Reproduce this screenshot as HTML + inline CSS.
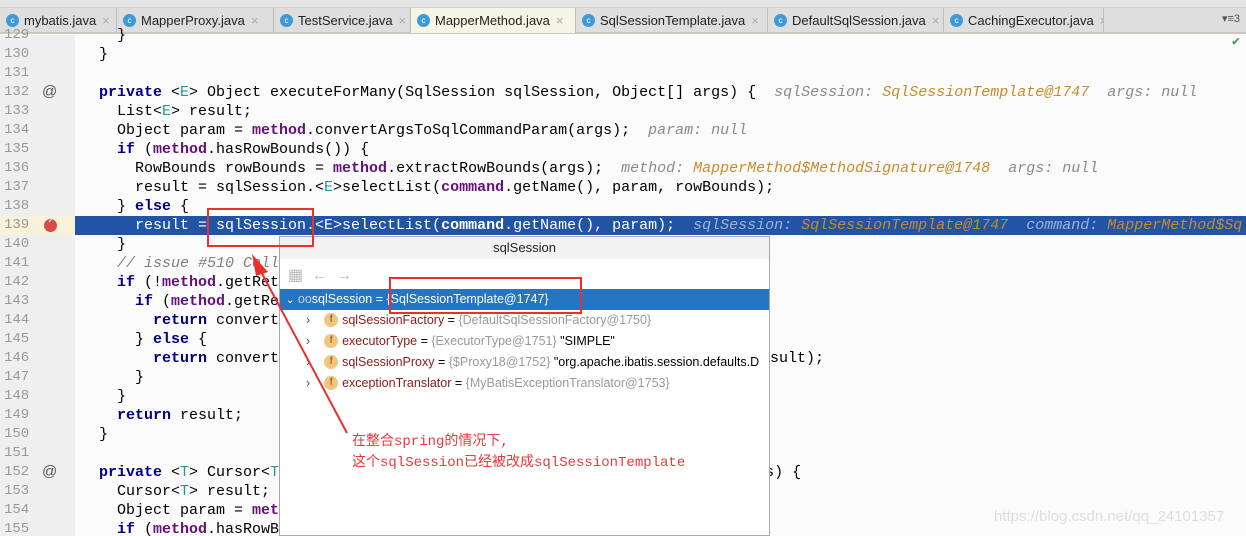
<!DOCTYPE html>
<html><head><meta charset="utf-8"><style>
*{margin:0;padding:0;box-sizing:border-box}
html,body{width:1246px;height:536px;overflow:hidden}
body{background:#fbfbfb;position:relative;font-family:"Liberation Mono",monospace}
#clip{position:absolute;left:0;top:0;width:1246px;height:536px;overflow:hidden}
.top{position:absolute;left:0;top:0;width:1246px;height:8px;background:#e4e4e4;border-bottom:1px solid #cfcfcf}
.tabs{position:absolute;left:0;top:8px;width:1246px;height:26px;background:#dedede;border-bottom:2px solid #c8c8bf}
.tab{position:absolute;top:0;height:25px;border-right:1px solid #bcbcbc;font:13px "Liberation Sans",sans-serif;color:#222;line-height:25px;padding-left:24px;white-space:nowrap;overflow:hidden}
.tab .c{position:absolute;left:6px;top:6px;width:13px;height:13px;border-radius:50%;background:#3d9ad6;color:#fff;font-size:8px;line-height:13px;text-align:center}
.tab .x{color:#aaa;margin-left:6px}
.tab.act{background:#f5f5e6}
.gutter{position:absolute;left:0;top:35px;width:75px;height:501px;background:#efefef}
.ln{position:absolute;left:4px;width:30px;font-size:14px;color:#999;height:19px;line-height:19px}
.code{position:absolute;left:0;height:19px;line-height:19px;font-size:15px;white-space:pre;color:#000}
.k{color:#000080;font-weight:bold}
.f{color:#660e7a;font-weight:bold}
.t{color:#20999d}
.h{color:#8a8a8a;font-style:italic}
.v{color:#c88b2a;font-style:italic}
.cm{color:#808080;font-style:italic}
.hl{position:absolute;left:75px;top:216px;width:1171px;height:19px;background:#2154a4}
.hl2{position:absolute;left:0;top:216px;width:75px;height:19px;background:#f7f2d9}
.popup{position:absolute;left:279px;top:236px;width:491px;height:300px;background:#fff;border:1px solid #a8a8a8;font-family:"Liberation Sans",sans-serif;overflow:hidden}
.ptitle{height:22px;background:#f2f2f2;text-align:center;font-size:13px;line-height:22px;color:#222}
.row{position:absolute;left:0;width:489px;height:21px;font-size:12.5px;line-height:21px;white-space:nowrap;overflow:hidden}
.fi{display:inline-block;width:14px;height:14px;border-radius:50%;background:#f2c57c;color:#7a4a00;font-size:10px;line-height:14px;text-align:center;vertical-align:middle;margin-right:4px;margin-top:-2px}
.nm{color:#8b1a1a}.gr{color:#999}
.rb{position:absolute;border:2px solid #e8312f}
.note{position:absolute;left:352px;color:#e43b3b;font-size:14px;font-family:"Liberation Mono","Noto Sans CJK SC",monospace;white-space:nowrap}
</style></head><body><div id="clip">
<div class="top"></div>
<div class="tabs">
<div class="tab" style="left:0;width:117px"><span class="c">c</span>mybatis.java<span class="x">×</span></div>
<div class="tab" style="left:117px;width:157px"><span class="c">c</span>MapperProxy.java<span class="x">×</span></div>
<div class="tab" style="left:274px;width:137px"><span class="c">c</span>TestService.java<span class="x">×</span></div>
<div class="tab act" style="left:411px;width:165px"><span class="c">c</span>MapperMethod.java<span class="x">×</span></div>
<div class="tab" style="left:576px;width:192px"><span class="c">c</span>SqlSessionTemplate.java<span class="x">×</span></div>
<div class="tab" style="left:768px;width:176px"><span class="c">c</span>DefaultSqlSession.java<span class="x">×</span></div>
<div class="tab" style="left:944px;width:160px"><span class="c">c</span>CachingExecutor.java<span class="x">×</span></div>
<div style="position:absolute;right:6px;top:4px;font:11px 'Liberation Sans';color:#555">▾≡3</div>
</div>
<div class="gutter"></div>
<div class="hl2"></div>
<div class="hl"></div>
<div style="position:absolute;left:1232px;top:34px;color:#3a9a3a;font-size:13px">✔</div>

<div class="ln" style="top:26px">129</div><div class="ln" style="top:45px">130</div><div class="ln" style="top:64px">131</div><div class="ln" style="top:83px">132</div><div class="ln" style="top:102px">133</div><div class="ln" style="top:121px">134</div><div class="ln" style="top:140px">135</div><div class="ln" style="top:159px">136</div><div class="ln" style="top:178px">137</div><div class="ln" style="top:197px">138</div><div class="ln" style="top:216px">139</div><div class="ln" style="top:235px">140</div><div class="ln" style="top:254px">141</div><div class="ln" style="top:273px">142</div><div class="ln" style="top:292px">143</div><div class="ln" style="top:311px">144</div><div class="ln" style="top:330px">145</div><div class="ln" style="top:349px">146</div><div class="ln" style="top:368px">147</div><div class="ln" style="top:387px">148</div><div class="ln" style="top:406px">149</div><div class="ln" style="top:425px">150</div><div class="ln" style="top:444px">151</div><div class="ln" style="top:463px">152</div><div class="ln" style="top:482px">153</div><div class="ln" style="top:501px">154</div><div class="ln" style="top:520px">155</div>
<div style="position:absolute;left:42px;top:83px;font:15px 'Liberation Sans';color:#555">@</div>
<div style="position:absolute;left:42px;top:463px;font:15px 'Liberation Sans';color:#555">@</div>
<div style="position:absolute;left:44px;top:219px;width:13px;height:13px;border-radius:50%;background:#d9484a"></div>
<div style="position:absolute;left:48px;top:216px;color:#fff;font-size:9px">✓</div>

<div class="code" style="top:26px;left:117px">}</div>
<div class="code" style="top:45px;left:99px">}</div>
<div class="code" style="top:83px;left:99px"><span class="k">private</span> &lt;<span class="t">E</span>&gt; Object executeForMany(SqlSession sqlSession, Object[] args) {  <span class="h">sqlSession: </span><span class="v">SqlSessionTemplate@1747</span>  <span class="h">args: null</span></div>
<div class="code" style="top:102px;left:117px">List&lt;<span class="t">E</span>&gt; result;</div>
<div class="code" style="top:121px;left:117px">Object param = <span class="f">method</span>.convertArgsToSqlCommandParam(args);  <span class="h">param: null</span></div>
<div class="code" style="top:140px;left:117px"><span class="k">if</span> (<span class="f">method</span>.hasRowBounds()) {</div>
<div class="code" style="top:159px;left:135px">RowBounds rowBounds = <span class="f">method</span>.extractRowBounds(args);  <span class="h">method: </span><span class="v">MapperMethod$MethodSignature@1748</span>  <span class="h">args: null</span></div>
<div class="code" style="top:178px;left:135px">result = sqlSession.&lt;<span class="t">E</span>&gt;selectList(<span class="f">command</span>.getName(), param, rowBounds);</div>
<div class="code" style="top:197px;left:117px">} <span class="k">else</span> {</div>
<div class="code" style="top:216px;left:135px;color:#fff">result = sqlSession.&lt;E&gt;selectList(<b>command</b>.getName(), param);  <span style="color:#9fb3d8;font-style:italic">sqlSession: </span><span class="v">SqlSessionTemplate@1747</span>  <span style="color:#9fb3d8;font-style:italic">command: </span><span class="v">MapperMethod$Sq</span></div>
<div class="code" style="top:235px;left:117px">}</div>
<div class="code" style="top:254px;left:117px"><span class="cm">// issue #510 Collections &amp; arrays support</span></div>
<div class="code" style="top:273px;left:117px"><span class="k">if</span> (!<span class="f">method</span>.getReturnsArray()) {</div>
<div class="code" style="top:292px;left:135px"><span class="k">if</span> (<span class="f">method</span>.getReturnsArray()) {</div>
<div class="code" style="top:311px;left:153px"><span class="k">return</span> convertToArray(result);</div>
<div class="code" style="top:330px;left:135px">} <span class="k">else</span> {</div>
<div class="code" style="top:349px;left:153px"><span class="k">return</span> convertToDeclaredCollection</div>
<div class="code" style="top:349px;left:770px">sult);</div>
<div class="code" style="top:368px;left:135px">}</div>
<div class="code" style="top:387px;left:117px">}</div>
<div class="code" style="top:406px;left:117px"><span class="k">return</span> result;</div>
<div class="code" style="top:425px;left:99px">}</div>
<div class="code" style="top:463px;left:99px"><span class="k">private</span> &lt;<span class="t">T</span>&gt; Cursor&lt;<span class="t">T</span>&gt; executeForCursor(SqlSession sqlSession, Object[] args) {</div>
<div class="code" style="top:482px;left:117px">Cursor&lt;<span class="t">T</span>&gt; result;</div>
<div class="code" style="top:501px;left:117px">Object param = <span class="f">method</span>.convertArgs</div>
<div class="code" style="top:520px;left:117px"><span class="k">if</span> (<span class="f">method</span>.hasRowBounds()) {</div>

<div class="popup">
<div class="ptitle">sqlSession</div>
<div style="position:absolute;left:8px;top:28px;font-size:16px;color:#bbb">▦ <span style="margin-left:4px">←</span> <span style="margin-left:4px">→</span></div>
<div class="row" style="top:52px;background:#2575c2;color:#fff;padding-left:6px"><span style="font-size:10px">⌄</span> <span style="color:#b9d3ee">oo</span>sqlSession = {SqlSessionTemplate@1747}</div>
<div class="row" style="top:73px;padding-left:26px"><span style="color:#555">›</span>&nbsp;&nbsp;&nbsp;&nbsp;<span class="fi">f</span><span class="nm">sqlSessionFactory</span> = <span class="gr">{DefaultSqlSessionFactory@1750}</span></div>
<div class="row" style="top:94px;padding-left:26px"><span style="color:#555">›</span>&nbsp;&nbsp;&nbsp;&nbsp;<span class="fi">f</span><span class="nm">executorType</span> = <span class="gr">{ExecutorType@1751}</span> "SIMPLE"</div>
<div class="row" style="top:115px;padding-left:26px"><span style="color:#555">›</span>&nbsp;&nbsp;&nbsp;&nbsp;<span class="fi">f</span><span class="nm">sqlSessionProxy</span> = <span class="gr">{$Proxy18@1752}</span> "org.apache.ibatis.session.defaults.D</div>
<div class="row" style="top:136px;padding-left:26px"><span style="color:#555">›</span>&nbsp;&nbsp;&nbsp;&nbsp;<span class="fi">f</span><span class="nm">exceptionTranslator</span> = <span class="gr">{MyBatisExceptionTranslator@1753}</span></div>
</div>

<div class="rb" style="left:207px;top:208px;width:107px;height:39px"></div>
<div class="rb" style="left:389px;top:277px;width:193px;height:37px"></div>
<svg style="position:absolute;left:0;top:0" width="1246" height="536"><line x1="347" y1="433" x2="258" y2="266" stroke="#e8312f" stroke-width="2"/><polygon points="252,254 268,272 256,276" fill="#e8312f"/></svg>
<div class="note" style="top:430px">在整合spring的情况下,</div>
<div class="note" style="top:451px">这个sqlSession已经被改成sqlSessionTemplate</div>
<div style="position:absolute;left:994px;top:508px;font:15px 'Liberation Sans',sans-serif;color:#dedede">https://blog.csdn.net/qq_24101357</div>
</div></body></html>
